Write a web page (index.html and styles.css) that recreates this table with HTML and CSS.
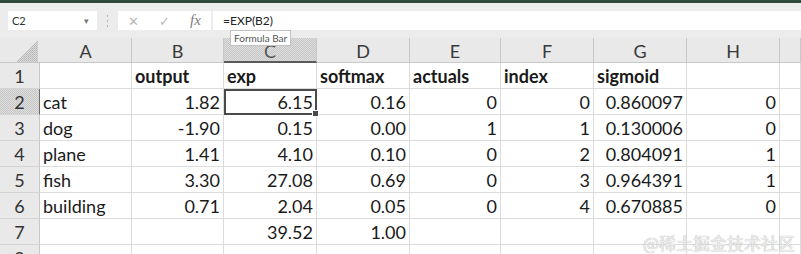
FILE: index.html
```html
<!DOCTYPE html>
<html lang="en">
<head>
    <meta charset="UTF-8">
    <title>Sheet</title>
    <link rel="stylesheet" href="styles.css">
</head>
<body>

    <div class="ribbon-edge"></div>

    <div class="formula-row">
        <div class="name-box">
            <span>C2</span>
            <span class="drop">&#9662;</span>
        </div>
        <div class="grip"><i></i><i></i><i></i></div>
        <div class="fx-buttons">
            <span class="btn">&#x2715;</span>
            <span class="btn">&#x2713;</span>
            <span class="btn fx">fx</span>
        </div>
        <div class="formula-input">=EXP(B2)</div>
    </div>

    <div class="sheet">
        <!-- column headers -->
        <div class="corner">
            <svg width="40" height="25" viewBox="0 0 40 25">
                <defs>
                    <pattern id="hatch" width="2" height="2" patternUnits="userSpaceOnUse">
                        <rect width="2" height="2" fill="#dadada"/>
                        <rect width="1" height="1" fill="#b4b4b4"/>
                        <rect x="1" y="1" width="1" height="1" fill="#c2c2c2"/>
                    </pattern>
                </defs>
                <polygon points="38,2 38,24 16,24" fill="url(#hatch)"/>
            </svg>
        </div>
        <div class="hd">A</div>
        <div class="hd">B</div>
        <div class="hd hd-sel">C</div>
        <div class="hd">D</div>
        <div class="hd">E</div>
        <div class="hd">F</div>
        <div class="hd">G</div>
        <div class="hd">H</div>
        <div class="hd"></div>

        <!-- row 1 -->
        <div class="rh">1</div>
        <div class="c"></div>
        <div class="c b">output</div>
        <div class="c b">exp</div>
        <div class="c b">softmax</div>
        <div class="c b">actuals</div>
        <div class="c b">index</div>
        <div class="c b">sigmoid</div>
        <div class="c"></div>
        <div class="c"></div>

        <!-- row 2 -->
        <div class="rh rh-sel">2</div>
        <div class="c">cat</div>
        <div class="c n">1.82</div>
        <div class="c n sel">6.15</div>
        <div class="c n">0.16</div>
        <div class="c n">0</div>
        <div class="c n">0</div>
        <div class="c n">0.860097</div>
        <div class="c n">0</div>
        <div class="c"></div>

        <!-- row 3 -->
        <div class="rh">3</div>
        <div class="c">dog</div>
        <div class="c n">-1.90</div>
        <div class="c n">0.15</div>
        <div class="c n">0.00</div>
        <div class="c n">1</div>
        <div class="c n">1</div>
        <div class="c n">0.130006</div>
        <div class="c n">0</div>
        <div class="c"></div>

        <!-- row 4 -->
        <div class="rh">4</div>
        <div class="c">plane</div>
        <div class="c n">1.41</div>
        <div class="c n">4.10</div>
        <div class="c n">0.10</div>
        <div class="c n">0</div>
        <div class="c n">2</div>
        <div class="c n">0.804091</div>
        <div class="c n">1</div>
        <div class="c"></div>

        <!-- row 5 -->
        <div class="rh">5</div>
        <div class="c">fish</div>
        <div class="c n">3.30</div>
        <div class="c n">27.08</div>
        <div class="c n">0.69</div>
        <div class="c n">0</div>
        <div class="c n">3</div>
        <div class="c n">0.964391</div>
        <div class="c n">1</div>
        <div class="c"></div>

        <!-- row 6 -->
        <div class="rh">6</div>
        <div class="c">building</div>
        <div class="c n">0.71</div>
        <div class="c n">2.04</div>
        <div class="c n">0.05</div>
        <div class="c n">0</div>
        <div class="c n">4</div>
        <div class="c n">0.670885</div>
        <div class="c n">0</div>
        <div class="c"></div>

        <!-- row 7 -->
        <div class="rh">7</div>
        <div class="c"></div>
        <div class="c"></div>
        <div class="c n">39.52</div>
        <div class="c n">1.00</div>
        <div class="c"></div>
        <div class="c"></div>
        <div class="c"></div>
        <div class="c"></div>
        <div class="c"></div>

        <!-- row 8 (cut off) -->
        <div class="rh">8</div>
        <div class="c"></div>
        <div class="c"></div>
        <div class="c"></div>
        <div class="c"></div>
        <div class="c"></div>
        <div class="c"></div>
        <div class="c"></div>
        <div class="c"></div>
        <div class="c"></div>
    </div>

    <div class="tooltip">Formula Bar</div>
    <div class="watermark">@稀土掘金技术社区</div>

</body>
</html>
```

FILE: styles.css
```css
/* spreadsheet grab - grey Excel look */
:root {
    --edge: #2d4a3a;
    --chrome: #ececec;
    --header: #e9e9e9;
    --header-line: #c8c8c8;
    --grid: #dcdcdc;
    --text: #1a1a1a;
    --hatch: repeating-conic-gradient(#c6c6c6 0 25%, #dedede 0 50%) 0 0 / 2px 2px;
}

html, body {
    margin: 0;
    height: 254px;
    overflow: hidden;
}

body {
    position: relative;
    background: #fff;
    font-family: Lato, "Open Sans", sans-serif;
    color: var(--text);
}

.ribbon-edge {
    height: 3px;
    background: var(--edge);
}

/* formula bar */
.formula-row {
    display: flex;
    align-items: center;
    height: 35px;
    background: var(--chrome);
    box-sizing: border-box;
    padding: 8px 0 8px 8px;
}

.name-box {
    width: 89px;
    height: 19px;
    background: #fff;
    display: flex;
    align-items: center;
    justify-content: space-between;
    padding: 0 8px 0 4px;
    box-sizing: border-box;
    font-size: 11px;
    color: #333;
}

.name-box .drop {
    font-size: 9px;
    color: #777;
}

.grip {
    width: 21px;
    display: flex;
    flex-direction: column;
    align-items: center;
    gap: 3px;
}

.grip i {
    width: 1px;
    height: 2px;
    background: #b5b5b5;
}

.fx-buttons {
    width: 93px;
    height: 19px;
    background: #fff;
    display: flex;
    align-items: center;
}

.btn {
    width: 31px;
    text-align: center;
    color: #b8b8b8;
    font-size: 13px;
}

.btn.fx {
    font-family: "Liberation Serif", serif;
    font-style: italic;
    font-size: 15px;
    color: #7d7d7d;
}

.formula-input {
    flex: 1;
    height: 19px;
    margin-left: 2px;
    background: #fff;
    font-size: 12px;
    line-height: 19px;
    padding-left: 10px;
    color: #222;
}

/* grid */
.sheet {
    display: grid;
    grid-template-columns: 40px 92px 92px 93px 93px 91px 93px 93px 93px 1fr;
    grid-template-rows: 25px repeat(8, 26px);
}

.corner {
    background: var(--header);
    border-bottom: 1px solid var(--header-line);
    box-sizing: border-box;
}

.corner svg {
    display: block;
}

.hd {
    background: var(--header);
    border-right: 1px solid var(--header-line);
    border-bottom: 1px solid var(--header-line);
    box-sizing: border-box;
    text-align: center;
    font-size: 18px;
    line-height: 26px;
    color: #3a3a3a;
}

.hd-sel {
    background: var(--hatch);
    border-bottom: 2px solid #5a5a5a;
    color: #555;
}

.rh {
    background: var(--header);
    border-right: 1px solid var(--header-line);
    border-bottom: 1px solid #d4d4d4;
    box-sizing: border-box;
    text-align: center;
    font-size: 18px;
    line-height: 27px;
    color: #333;
}

.rh-sel {
    background: var(--hatch);
    border-right: 1px solid #6a6a6a;
}

.c {
    border-right: 1px solid var(--grid);
    border-bottom: 1px solid var(--grid);
    box-sizing: border-box;
    font-size: 18px;
    line-height: 27px;
    padding: 0 3px;
    white-space: nowrap;
    overflow: hidden;
}

.n {
    text-align: right;
}

.b {
    font-weight: 700;
}

.sel {
    position: relative;
    border: 2px solid #4a4a4a;
    line-height: 23px;
    padding: 0 2px;
    overflow: visible;
}

.sel::after {
    content: "";
    position: absolute;
    right: -4px;
    bottom: -4px;
    width: 5px;
    height: 5px;
    background: #4a4a4a;
    border: 1px solid #fff;
}

/* overlays */
.tooltip {
    position: absolute;
    left: 230px;
    top: 30px;
    padding: 1px 3px;
    background: #fff;
    border: 1px solid #c2c2c2;
    font-size: 10px;
    color: #555;
}

.watermark {
    position: absolute;
    right: 6px;
    top: 230px;
    font-family: "Noto Sans CJK SC", sans-serif;
    font-size: 17px;
    color: #ededed;
    text-shadow: 0 0 1px #9a9a9a;
}
```
